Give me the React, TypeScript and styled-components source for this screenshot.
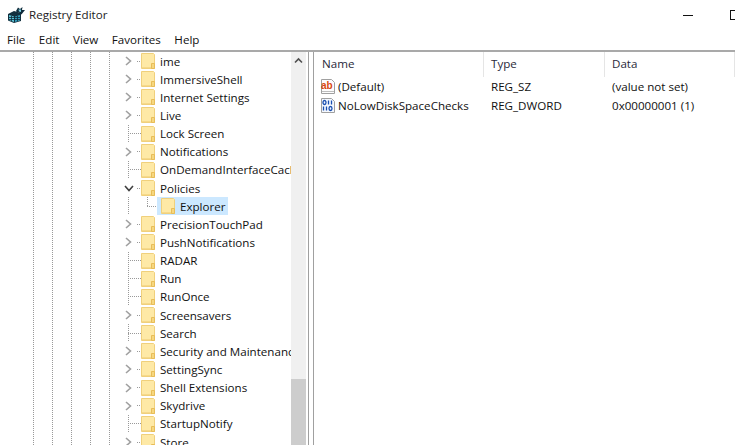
import React from "react";
import styled, { createGlobalStyle } from "styled-components";

type TreeKey = { name: string; expandable: boolean };

const keysBefore: TreeKey[] = [
    { name: "ime", expandable: true },
    { name: "ImmersiveShell", expandable: true },
    { name: "Internet Settings", expandable: true },
    { name: "Live", expandable: true },
    { name: "Lock Screen", expandable: false },
    { name: "Notifications", expandable: true },
    { name: "OnDemandInterfaceCache", expandable: false },
];

const keysAfter: TreeKey[] = [
    { name: "PrecisionTouchPad", expandable: true },
    { name: "PushNotifications", expandable: true },
    { name: "RADAR", expandable: false },
    { name: "Run", expandable: false },
    { name: "RunOnce", expandable: false },
    { name: "Screensavers", expandable: true },
    { name: "Search", expandable: false },
    { name: "Security and Maintenance", expandable: true },
    { name: "SettingSync", expandable: true },
    { name: "Shell Extensions", expandable: true },
    { name: "Skydrive", expandable: true },
    { name: "StartupNotify", expandable: false },
    { name: "Store", expandable: true },
];

const FolderIcon: React.FC = () => (
    <FolderSvg width="14" height="17" viewBox="0 0 14 17">
        <path d="M0.5 0.5 L12.5 0.5 L13.5 1.5 L13.5 15.5 L0.5 15.5 Z" fill="#fee9a6" stroke="#f0d07c" />
        <path d="M1 14.5 L10 14.5" stroke="#f6d98a" />
        <path d="M10.5 15.5 L10.5 10.5 L13.5 10.5 L13.5 15.5 Z" fill="#f6d77f" stroke="#e8bd58" />
    </FolderSvg>
);

const ChevronRight: React.FC = () => (
    <svg width="9" height="10" viewBox="0 0 9 10">
        <path d="M2 1 L6.5 5 L2 9" fill="none" stroke="#a0a0a0" strokeWidth="1.6" />
    </svg>
);

const ChevronDown: React.FC = () => (
    <svg width="10" height="9" viewBox="0 0 10 9">
        <path d="M1 2 L5 6.5 L9 2" fill="none" stroke="#404040" strokeWidth="1.6" />
    </svg>
);

const RegeditIcon: React.FC = () => (
    <svg width="17" height="16" viewBox="0 0 17 16">
        <path d="M0 7 L6 4 L13 6 L13 14 L6 16 L0 13.5 Z" fill="#12303f" />
        <path d="M1 8 L6 9.5 L6 15 L1 13 Z" fill="#5cc3d6" />
        <path d="M7 9.5 L12 8 L12 13.5 L7 15 Z" fill="#2f9ab8" />
        <path d="M1 10.5 L12 10.5 M1 12.5 L12 12.5 M3.5 9 L3.5 14 M9.5 9 L9.5 14" stroke="#0e2a3a" strokeWidth="0.8" />
        <path d="M8 4 L10 0.5 L12 2 L14.5 0 L14 3 L17 3 L15 5.5 L13.5 7.5 L11 5.5 L9 5.5 Z" fill="#0f2c3c" />
        <path d="M10.5 2.5 L13 2.5 L13 5 L11 4.5 Z" fill="#7fd5e8" />
    </svg>
);

const StringValueIcon: React.FC = () => (
    <svg width="16" height="16" viewBox="0 0 16 16">
        <path d="M1.5 0.5 L11.5 0.5 L14.5 3.5 L14.5 14.5 L1.5 14.5 Z" fill="#fdfdfd" stroke="#a0a0a0" />
        <AbLabel x="1" y="10">ab</AbLabel>
        <path d="M2 12.5 L14 12.5" stroke="#bdbdbd" />
    </svg>
);

const BinaryValueIcon: React.FC = () => (
    <svg width="16" height="16" viewBox="0 0 16 16">
        <path d="M1.5 0.5 L11.5 0.5 L14.5 3.5 L14.5 14.5 L1.5 14.5 Z" fill="#f4f8ff" stroke="#a0a0a0" />
        <g fill="none" stroke="#1a4fb0" strokeWidth="1.3">
            <ellipse cx="4.5" cy="4.5" rx="1.5" ry="2" />
            <path d="M8.5 2.5 L8.5 6.5 M11.5 2.5 L11.5 6.5" />
            <path d="M3.5 8.5 L3.5 12.5 M6.5 8.5 L6.5 12.5" />
            <ellipse cx="10.5" cy="10.5" rx="1.5" ry="2" />
        </g>
    </svg>
);

const TreeRow: React.FC<{ item: TreeKey }> = ({ item }) => (
    <Row>
        <Stub $leaf={!item.expandable}>{item.expandable && <ChevronRight />}</Stub>
        <FolderIcon />
        <KeyName>{item.name}</KeyName>
    </Row>
);

const App: React.FC = () => {
    return (
        <Window>
            <GlobalStyle />
            <TitleBar>
                <RegeditIcon />
                <TitleText>Registry Editor</TitleText>
                <WindowButtons>
                    <Minimize />
                    <Maximize />
                </WindowButtons>
            </TitleBar>
            <MenuBar>
                <MenuItem>File</MenuItem>
                <MenuItem>Edit</MenuItem>
                <MenuItem>View</MenuItem>
                <MenuItem>Favorites</MenuItem>
                <MenuItem>Help</MenuItem>
            </MenuBar>
            <Panes>
                <TreePane>
                    <Tree>
                        {keysBefore.map(item => <TreeRow key={item.name} item={item} />)}
                        <Row>
                            <Stub><ChevronDown /></Stub>
                            <FolderIcon />
                            <KeyName>Policies</KeyName>
                        </Row>
                        <Row>
                            <Stub $leaf $noBranch />
                            <ChildBranch />
                            <Selected>
                                <FolderIcon />
                                <KeyName>Explorer</KeyName>
                            </Selected>
                        </Row>
                        {keysAfter.map(item => <TreeRow key={item.name} item={item} />)}
                    </Tree>
                    <Scrollbar>
                        <ScrollArrow>
                            <svg width="9" height="7" viewBox="0 0 9 7">
                                <path d="M1 5.5 L4.5 2 L8 5.5" fill="none" stroke="#505050" strokeWidth="1.6" />
                            </svg>
                        </ScrollArrow>
                        <ScrollThumb />
                    </Scrollbar>
                </TreePane>
                <ValuesPane>
                    <HeaderRow>
                        <HeaderCell $width={170}>Name</HeaderCell>
                        <HeaderCell $width={121}>Type</HeaderCell>
                        <HeaderCell $width={130}>Data</HeaderCell>
                    </HeaderRow>
                    <ValueRow>
                        <NameCell><StringValueIcon />(Default)</NameCell>
                        <TypeCell>REG_SZ</TypeCell>
                        <DataCell>(value not set)</DataCell>
                    </ValueRow>
                    <ValueRow>
                        <NameCell><BinaryValueIcon />NoLowDiskSpaceChecks</NameCell>
                        <TypeCell>REG_DWORD</TypeCell>
                        <DataCell>0x00000001 (1)</DataCell>
                    </ValueRow>
                </ValuesPane>
            </Panes>
        </Window>
    );
};

export default App;

const GlobalStyle = createGlobalStyle`
    html, body {
        margin: 0;
        padding: 0;
        background: #fff;
        overflow: hidden;
    }
`;

const Window = styled.div`
    width: 735px;
    height: 445px;
    display: flex;
    flex-direction: column;
    overflow: hidden;
    background: #fff;
    color: #111;
    font-family: "Open Sans", "Liberation Sans", sans-serif;
    font-size: 11.6px;
`;

const TitleBar = styled.div`
    height: 30px;
    flex: none;
    display: flex;
    align-items: center;
    padding-left: 8px;
    box-sizing: border-box;
`;

const TitleText = styled.span`
    margin: 0 0 2px 4px;
    color: #222;
`;

const WindowButtons = styled.div`
    margin-left: auto;
    display: flex;
    align-items: center;
    gap: 37px;
    margin-right: -5px;
`;

const Minimize = styled.span`
    width: 10px;
    height: 1px;
    background: #111;
`;

const Maximize = styled.span`
    width: 10px;
    height: 10px;
    border: 1px solid #111;
    box-sizing: border-box;
`;

const MenuBar = styled.div`
    height: 18px;
    padding: 0 0 2px 7px;
    flex: none;
    display: flex;
    align-items: center;
    gap: 13.5px;
    border-bottom: 2px solid #a9a9a9;
    box-sizing: content-box;
`;

const MenuItem = styled.span``;

const Panes = styled.div`
    flex: 1;
    min-height: 0;
    display: flex;
`;

const TreePane = styled.div`
    width: 308px;
    flex: none;
    display: flex;
    border-right: 1px solid #a0a0a0;
    margin-right: 4px;
`;

const Tree = styled.div`
    width: 291px;
    flex: none;
    overflow: hidden;
    box-sizing: border-box;
    background-image:
        repeating-linear-gradient(#999 0 1px, transparent 1px 2px),
        repeating-linear-gradient(#999 0 1px, transparent 1px 2px),
        repeating-linear-gradient(#999 0 1px, transparent 1px 2px),
        repeating-linear-gradient(#999 0 1px, transparent 1px 2px),
        repeating-linear-gradient(#999 0 1px, transparent 1px 2px);
    background-size: 1px 100%;
    background-repeat: no-repeat;
    background-position: 33px 0, 52px 0, 71px 0, 90px 0, 109px 0;
`;

const Row = styled.div`
    height: 18.15px;
    display: flex;
    align-items: center;
    padding-left: 122px;
    white-space: nowrap;
`;

const Stub = styled.span<{ $leaf?: boolean; $noBranch?: boolean }>`
    width: 19px;
    height: 100%;
    flex: none;
    display: flex;
    align-items: center;
    padding-left: 2px;
    box-sizing: border-box;
    background-image: ${p => p.$leaf
        ? `repeating-linear-gradient(#999 0 1px, transparent 1px 2px)${p.$noBranch ? "" : ", repeating-linear-gradient(90deg, #999 0 1px, transparent 1px 2px)"}`
        : "repeating-linear-gradient(90deg, #999 0 1px, transparent 1px 2px)"};
    background-repeat: no-repeat;
    background-size: ${p => p.$leaf
        ? (p.$noBranch ? "1px 100%" : "1px 100%, 13px 1px")
        : "4px 1px"};
    background-position: ${p => p.$leaf
        ? (p.$noBranch ? "6px 0" : "6px 0, 6px 50%")
        : "15px 50%"};
`;

const ChildBranch = styled.span`
    width: 16px;
    height: 100%;
    flex: none;
    background-image:
        repeating-linear-gradient(#999 0 1px, transparent 1px 2px),
        repeating-linear-gradient(90deg, #999 0 1px, transparent 1px 2px);
    background-repeat: no-repeat;
    background-size: 1px 50%, 10px 1px;
    background-position: 6px 0, 6px 50%;
`;

const FolderSvg = styled.svg`
    flex: none;
    display: block;
    margin-top: 1px;
`;

const KeyName = styled.span`
    margin-left: 5px;
    line-height: 17px;
`;

const Selected = styled.span`
    display: flex;
    align-items: center;
    height: 100%;
    padding: 0 2px 0 4px;
    background: #cce8ff;
`;

const Scrollbar = styled.div`
    width: 15px;
    flex: none;
    display: flex;
    flex-direction: column;
    background: #f0f0f0;
`;

const ScrollArrow = styled.div`
    height: 17px;
    display: flex;
    align-items: center;
    justify-content: center;
`;

const ScrollThumb = styled.div`
    height: 66px;
    margin-top: auto;
    background: #cdcdcd;
`;

const ValuesPane = styled.div`
    flex: 1;
    min-width: 0;
    border-left: 1px solid #a0a0a0;
`;

const HeaderRow = styled.div`
    display: flex;
    height: 25px;
`;

const HeaderCell = styled.div<{ $width: number }>`
    width: ${p => p.$width}px;
    flex: none;
    box-sizing: border-box;
    padding-left: 7px;
    line-height: 24px;
    color: #2a2a3a;
    border-right: 1px solid #e5e5e5;
    &:first-child {
        padding-left: 8px;
    }
`;

const ValueRow = styled.div`
    display: flex;
    height: 19px;
    align-items: center;
    white-space: nowrap;
`;

const NameCell = styled.div`
    width: 170px;
    flex: none;
    display: flex;
    align-items: center;
    gap: 2px;
    padding-left: 6px;
    box-sizing: border-box;
`;

const TypeCell = styled.div`
    width: 121px;
    flex: none;
    padding-left: 7px;
    box-sizing: border-box;
`;

const DataCell = styled.div`
    padding-left: 7px;
`;

const AbLabel = styled.text`
    font-family: "Liberation Sans", sans-serif;
    font-size: 10px;
    font-weight: 700;
    fill: #d9480f;
`;
